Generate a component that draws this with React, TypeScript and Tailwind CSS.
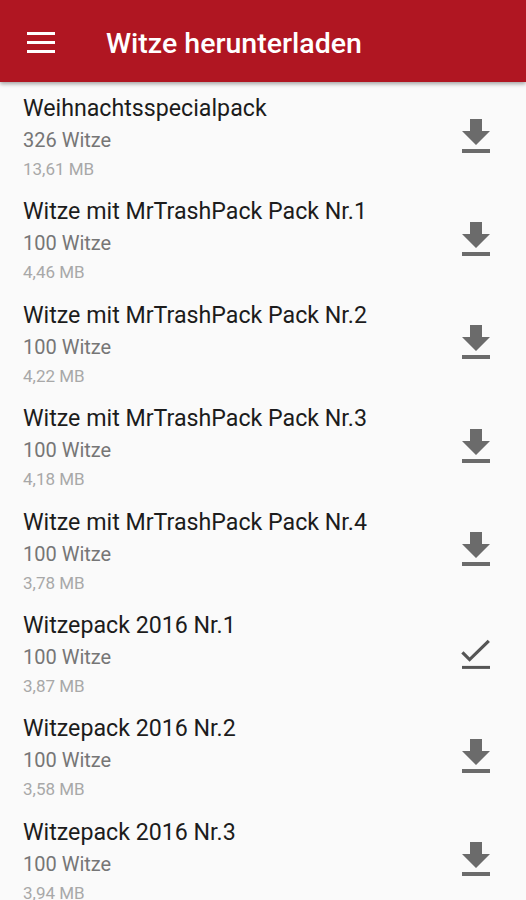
const packs = [
  { name: 'Weihnachtsspecialpack', count: '326 Witze', size: '13,61 MB', done: false },
  { name: 'Witze mit MrTrashPack Pack Nr.1', count: '100 Witze', size: '4,46 MB', done: false },
  { name: 'Witze mit MrTrashPack Pack Nr.2', count: '100 Witze', size: '4,22 MB', done: false },
  { name: 'Witze mit MrTrashPack Pack Nr.3', count: '100 Witze', size: '4,18 MB', done: false },
  { name: 'Witze mit MrTrashPack Pack Nr.4', count: '100 Witze', size: '3,78 MB', done: false },
  { name: 'Witzepack 2016 Nr.1', count: '100 Witze', size: '3,87 MB', done: true },
  { name: 'Witzepack 2016 Nr.2', count: '100 Witze', size: '3,58 MB', done: false },
  { name: 'Witzepack 2016 Nr.3', count: '100 Witze', size: '3,94 MB', done: false },
];

const DownloadIcon = () => (
  <svg width="48" height="48" viewBox="0 0 24 24" fill="#6b6b6b">
    <path d="M19 9h-4V3H9v6H5l7 7 7-7zM5 18v2h14v-2H5z" />
  </svg>
);

const DoneIcon = () => (
  <svg width="48" height="48" viewBox="0 0 24 24" fill="none" stroke="#555">
    <path d="M5.2 11.2l3.6 3.6 9.6-9.4" strokeWidth="1.6" />
    <path d="M5 18.7h14" strokeWidth="1.5" />
  </svg>
);

const App: React.FC = () => {
  return (
    <div className="w-[526px] h-[900px] overflow-hidden bg-[#fafafa] font-['Roboto',sans-serif]">
      <div className="h-[82px] bg-[#b01622] flex items-center shadow-[0_2px_4px_rgba(0,0,0,0.35)] relative z-10">
        <div className="ml-[27px] mt-[3px] w-[28px] flex flex-col gap-[6px]">
          <span className="h-[3px] bg-white block"></span>
          <span className="h-[3px] bg-white block"></span>
          <span className="h-[3px] bg-white block"></span>
        </div>
        <h1 className="ml-[51px] mt-[6px] text-white text-[28.5px] font-medium leading-none">Witze herunterladen</h1>
      </div>
      <div className="pt-[2px]">
        {packs.map((p, i) => (
          <div key={i} className="h-[103.4px] flex items-center pl-[23px] pr-[26px]">
            <div className="flex-1 pt-[10px] self-start">
              <div className="text-[23.2px] leading-[28px] text-[#1c1c1c]">{p.name}</div>
              <div className="mt-[4px] text-[20px] leading-[28px] text-[#767676]">{p.count}</div>
              <div className="text-[17px] leading-[30px] text-[#a8a8a8]">{p.size}</div>
            </div>
            <div className="mt-[2px]">{p.done ? <DoneIcon /> : <DownloadIcon />}</div>
          </div>
        ))}
      </div>
    </div>
  );
};

export default App;
